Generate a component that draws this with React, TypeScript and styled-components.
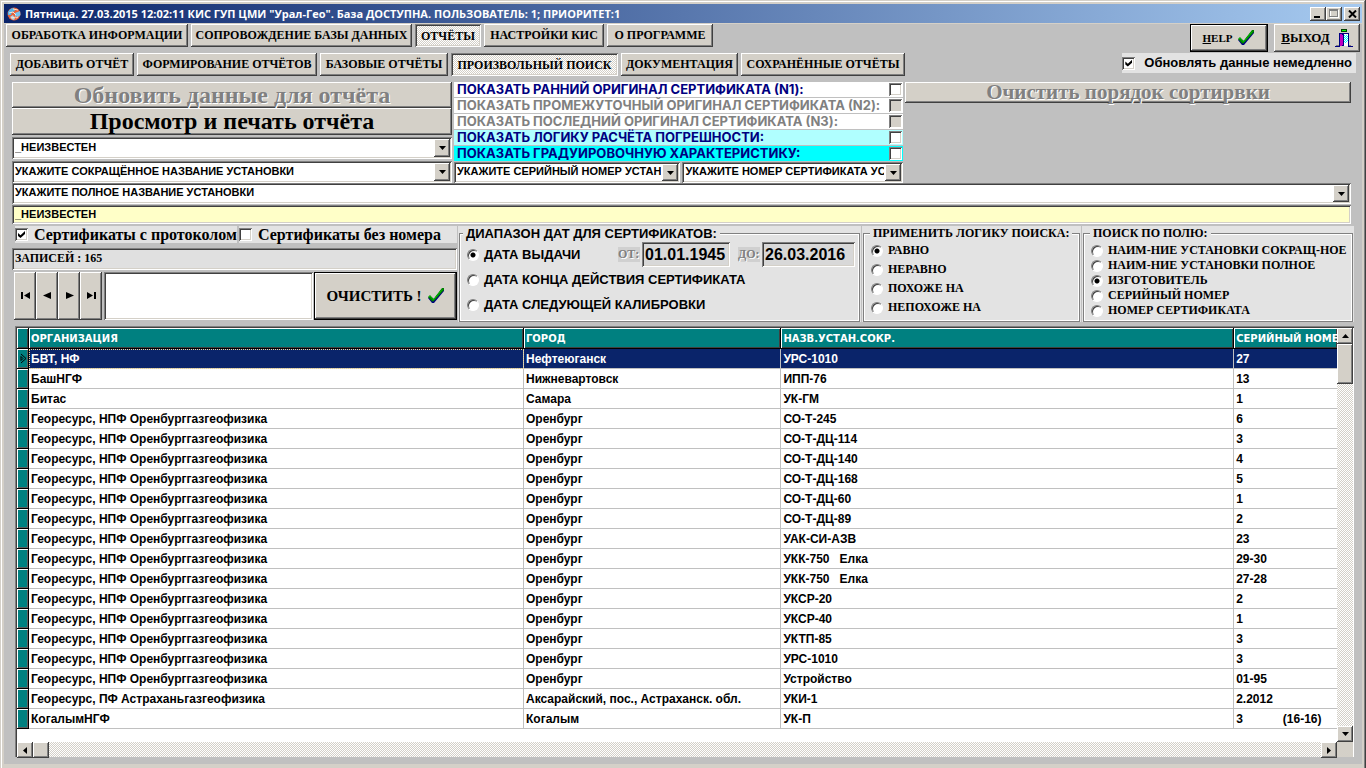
import React from 'react';
import styled, { createGlobalStyle, css } from 'styled-components';

const SERIF = '"Times New Roman", "Liberation Serif", serif';
const SANS = 'Arial, "Liberation Sans", sans-serif';
const COMIC = '"Comic Sans MS", "DejaVu Sans", sans-serif';
const COMIC_LARGE = '"Comic Sans MS", Inter, sans-serif';
const FACE = '#d4d0c8';

const raised = css`
  box-shadow: inset -1px -1px 0 #404040, inset 1px 1px 0 #fff, inset -2px -2px 0 #808080;
`;
const sunken = css`
  box-shadow: inset 1px 1px 0 #808080, inset -1px -1px 0 #fff, inset 2px 2px 0 #404040,
    inset -2px -2px 0 ${FACE};
`;
const dither = css`
  background: repeating-conic-gradient(#fff 0 25%, ${FACE} 0 50%) 0 0 / 2px 2px;
`;

const GlobalStyle = createGlobalStyle`
  * { box-sizing: border-box; }
  body { margin: 0; background: ${FACE}; color: #000; }
  button, input, select { margin: 0; border: 0; border-radius: 0; padding: 0; color: inherit; font: inherit; }
`;

const Frame = styled.div`
  display: flex;
  flex-direction: column;
  min-height: 100vh;
  padding: 4px;
  background: ${FACE};
  box-shadow: inset -1px 0 0 #404040, inset 1px 1px 0 ${FACE}, inset -2px 0 0 #808080, inset 2px 2px 0 #fff;
`;

const TitleBar = styled.header`
  display: flex;
  align-items: center;
  gap: 4px;
  height: 19px;
  margin-bottom: 1px;
  padding: 0 2px 0 3px;
  background: linear-gradient(90deg, #0a246a, #a6caf0);
  color: #fff;
`;
const Title = styled.h1`
  flex: 1;
  margin: 0;
  font: bold 11px/19px Tahoma, "Open Sans", sans-serif;
  white-space: nowrap;
`;
const WindowButtons = styled.div`
  display: flex;
`;
const WindowButton = styled.button<{ $gap?: boolean }>`
  display: flex;
  align-items: center;
  justify-content: center;
  width: 16px;
  height: 14px;
  margin-left: ${(p) => (p.$gap ? 2 : 0)}px;
  background: ${FACE};
  ${raised}
`;

const Client = styled.main`
  display: flex;
  flex: 1;
  flex-direction: column;
  background: #c0c0c0;
`;

const Header = styled.div`
  display: flex;
  justify-content: space-between;
  padding: 0 2px;
`;
const TabRows = styled.nav`
  display: flex;
  flex-direction: column;
  gap: 6px;
`;
const TabRow = styled.div<{ $indent?: boolean }>`
  display: flex;
  gap: 3px;
  padding-left: ${(p) => (p.$indent ? 4 : 0)}px;
`;
const Tab = styled.button<{ $w: number; $active?: boolean }>`
  min-width: ${(p) => p.$w}px;
  height: 23px;
  padding: 0 2px 2px;
  background: ${FACE};
  font: bold 12px/20px ${SERIF};
  white-space: nowrap;
  ${raised}
  ${(p) => p.$active && css`
    padding: 0 2px;
    ${dither}
    ${sunken}
  `}
`;
const HeaderSide = styled.div`
  display: flex;
  flex-direction: column;
  align-items: flex-end;
  gap: 1px;
`;
const HeaderButtons = styled.div`
  display: flex;
  gap: 6px;
`;
const SideButton = styled.button<{ $w: number; $default?: boolean }>`
  display: flex;
  align-items: center;
  justify-content: center;
  gap: 5px;
  width: ${(p) => p.$w}px;
  height: 28px;
  border: ${(p) => (p.$default ? '1px solid #000' : '0')};
  background: ${FACE};
  font: bold ${(p) => (p.$default ? 11 : 13)}px/20px ${SERIF};
  ${raised}
`;
const Instant = styled.label`
  display: flex;
  align-items: center;
  gap: 9px;
  height: 20px;
  margin-right: 4px;
  padding: 0 4px 0 0;
  background: #e3e3e3;
  font: bold 13px/20px ${SANS};
  white-space: nowrap;
`;

const Check = styled.input.attrs({ type: 'checkbox' })`
  flex: none;
  position: relative;
  width: 13px;
  height: 13px;
  appearance: none;
  background: #fff;
  ${sunken}
  &:disabled { background: ${FACE}; }
  &:checked::after {
    content: "";
    position: absolute;
    inset: 3px;
    background: #000;
    clip-path: polygon(0 28%, 36% 60%, 100% 0, 100% 42%, 36% 100%, 0 70%);
  }
`;
const Radio = styled.input.attrs({ type: 'radio' })`
  flex: none;
  width: 12px;
  height: 12px;
  appearance: none;
  border: 1px solid;
  border-color: #808080 #fff #fff #808080;
  border-radius: 50%;
  background: #fff;
  box-shadow: inset 1px 1px 0 #404040;
  &:checked { background: radial-gradient(circle, #000 2px, #fff 3px); }
`;

const Filters = styled.section`
  display: flex;
  flex-direction: column;
  padding: 6px 11px 0 8px;
`;
const FilterGrid = styled.div`
  display: grid;
  grid-template-columns: 440fr 449fr 446fr;
  gap: 2px;
  align-items: start;
`;
const Stack = styled.div<{ $gap?: number }>`
  display: flex;
  flex-direction: column;
  min-width: 0;
  gap: ${(p) => p.$gap ?? 0}px;
`;
const BigButton = styled.button<{ $h: number; $size?: number }>`
  width: 100%;
  height: ${(p) => p.$h}px;
  background: ${FACE};
  font: bold ${(p) => p.$size ?? 24}px/${(p) => p.$h}px ${SERIF};
  white-space: nowrap;
  ${raised}
  &:disabled { color: #808080; text-shadow: 1px 1px 0 #fff; }
`;
const ComboBox = styled.div<{ $h: number; $grow: number }>`
  display: grid;
  flex: ${(p) => p.$grow} 1 0;
  min-width: 0;
  height: ${(p) => p.$h}px;
  padding: 2px;
  background: #fff;
  ${sunken}
`;
const ComboSelect = styled.select`
  grid-area: 1 / 1;
  width: 100%;
  min-width: 0;
  padding: 0 17px 2px 1px;
  appearance: none;
  background: transparent;
  font: bold 11px/15px ${SANS};
  text-overflow: clip;
  outline: 0;
`;
const ArrowBox = styled.span`
  z-index: 1;
  display: flex;
  grid-area: 1 / 1;
  align-items: center;
  justify-content: center;
  justify-self: end;
  width: 16px;
  background: ${FACE};
  pointer-events: none;
  ${raised}
`;
const ComboRow = styled.div`
  display: flex;
  gap: 2px;
`;
const ShowOption = styled.label<{ $bg: string; $off?: boolean }>`
  display: flex;
  align-items: center;
  height: 16px;
  padding: 0 1px 0 3px;
  border-bottom: 1px solid #c0c0c0;
  background: ${(p) => p.$bg};
  color: ${(p) => (p.$off ? '#808080' : '#000080')};
  font: bold 13px/15px ${COMIC_LARGE};
  white-space: nowrap;
`;
const OptionText = styled.span`
  flex: 1;
  min-width: 0;
`;
const Maker = styled.input`
  width: 100%;
  height: 19px;
  margin-top: 1px;
  padding: 0 3px 2px;
  background: #ffffc8;
  font: bold 11px/17px ${SANS};
  outline: 0;
  ${sunken}
`;

const Search = styled.section`
  display: grid;
  grid-template-columns: 445fr 403fr 219fr 272fr;
  gap: 1px;
  padding: 2px 8px 0 8px;
`;
const CertRow = styled.div`
  display: flex;
  gap: 2px;
  padding-left: 3px;
`;
const CertLabel = styled.label<{ $grow: number }>`
  display: flex;
  flex: ${(p) => p.$grow} 1 0;
  align-items: center;
  gap: 6px;
  min-width: 0;
  height: 17px;
  background: #e3e3e3;
  font: bold 16px/17px ${SERIF};
  white-space: nowrap;
`;
const Records = styled.div`
  height: 22px;
  margin: 5px 0 2px;
  padding: 0 3px;
  background: #e0e0e0;
  font: bold 12px/20px ${SERIF};
  ${sunken}
`;
const NavRow = styled.div`
  display: flex;
  height: 48px;
  padding-left: 2px;
`;
const NavButton = styled.button`
  display: flex;
  align-items: center;
  justify-content: center;
  width: 22px;
  background: ${FACE};
  ${raised}
`;
const QueryInput = styled.input`
  flex: 1;
  min-width: 0;
  margin: 0 1px 0 2px;
  padding: 0 4px;
  background: #fff;
  font: bold 14px/20px ${SANS};
  outline: 0;
  ${sunken}
`;
const ClearButton = styled.button`
  display: flex;
  align-items: center;
  justify-content: center;
  gap: 5px;
  width: 143px;
  border: 1px solid #000;
  background: ${FACE};
  font: bold 15px/20px ${SERIF};
  ${raised}
`;

const Panel = styled.div`
  min-width: 0;
  min-height: 96px;
  padding: 0 1px;
  background: #e3e3e3;
`;
const Group = styled.fieldset<{ $serif?: boolean; $pad: number }>`
  height: 100%;
  min-width: 0;
  margin: 0;
  padding: ${(p) => p.$pad}px 4px 0 7px;
  border: 1px solid #808080;
  box-shadow: inset 1px 1px 0 #fff, inset -1px -1px 0 #fff;
  font: ${(p) => (p.$serif ? `bold 12px/15px ${SERIF}` : `bold 13px/15px ${SANS}`)};
`;
const Legend = styled.legend<{ $inset?: boolean }>`
  height: 15px;
  margin-left: ${(p) => (p.$inset ? -1 : -4)}px;
  padding: 0 3px;
  background: #e3e3e3;
  white-space: nowrap;
`;
const Choices = styled.div`
  display: flex;
  flex-direction: column;
`;
const ChoiceRow = styled.div<{ $h: number }>`
  display: flex;
  align-items: center;
  justify-content: space-between;
  height: ${(p) => p.$h}px;
`;
const Choice = styled.label`
  display: flex;
  align-items: center;
  gap: 5px;
  white-space: nowrap;
`;
const Dates = styled.div`
  display: flex;
  align-items: center;
  gap: 8px;
`;
const DateField = styled.label`
  display: flex;
  align-items: center;
  gap: 2px;
  color: #808080;
  text-shadow: 1px 1px 0 #fff;
  font: bold 12px/15px ${SERIF};
`;
const DateCaption = styled.span`
  width: 22px;
  background: #d0d0d0;
`;
const DateInput = styled.input<{ $w: number }>`
  width: ${(p) => p.$w}px;
  height: 25px;
  padding: 0 3px;
  background: #d8d8d8;
  color: #000;
  font: bold 16px/20px ${SANS};
  outline: 0;
  ${sunken}
`;

const GridBox = styled.section`
  display: flex;
  flex: 1;
  flex-direction: column;
  margin: 4px 8px 7px 11px;
  padding: 2px 1px 0 2px;
  background: #fff;
  box-shadow: inset 1px 1px 0 #808080, inset 2px 2px 0 #404040, inset -1px 0 0 #fff;
`;
const GridMain = styled.div`
  display: flex;
  flex: 1;
`;
const TableArea = styled.div`
  flex: 1;
  min-width: 0;
  overflow: hidden;
`;
const Table = styled.table`
  width: 100%;
  table-layout: fixed;
  border-collapse: separate;
  border-spacing: 0;
  font: bold 12px/17px ${SANS};
`;
const Col = styled.col<{ $w?: string }>`
  width: ${(p) => p.$w ?? 'auto'};
`;
const HeadCell = styled.th`
  height: 21px;
  padding: 2px 2px 0;
  overflow: hidden;
  border-right: 1px solid #000;
  border-bottom: 1px solid #000;
  background: #008080;
  box-shadow: inset 1px 1px 0 #fff, inset -1px -1px 0 #404040;
  color: #fff;
  font: bold 10px/18px ${COMIC};
  text-align: left;
  white-space: nowrap;
  &:last-child { border-right: 0; }
`;
const Marker = styled.td`
  padding: 0;
  border-right: 1px solid #000;
  border-bottom: 1px solid #000;
  background: #008080;
  box-shadow: inset 1px 1px 0 #fff, inset -1px -1px 0 #606060;
  line-height: 0;
`;
const Cell = styled.td`
  height: 20px;
  padding: 2px 2px 0;
  overflow: hidden;
  border-right: 1px solid #c0c0c0;
  border-bottom: 1px solid #c0c0c0;
  white-space: pre;
  &:last-child { border-right: 0; }
`;
const Row = styled.tr<{ $selected?: boolean }>`
  ${(p) => p.$selected && css`
    background: #0a246a;
    color: #fff;
    ${Cell}:nth-child(2) { outline: 1px dotted #f5db95; outline-offset: -1px; }
  `}
`;
const VScroll = styled.div`
  display: flex;
  flex-direction: column;
  width: 16px;
  ${dither}
`;
const HScroll = styled.div`
  display: flex;
  height: 15px;
  ${dither}
`;
const ScrollButton = styled.button`
  display: flex;
  flex: none;
  align-items: center;
  justify-content: center;
  width: 16px;
  height: 16px;
  background: ${FACE};
  ${raised}
`;
const Thumb = styled.div<{ $w: number; $h: number }>`
  width: ${(p) => p.$w}px;
  height: ${(p) => p.$h}px;
  background: ${FACE};
  ${raised}
`;
const Spacer = styled.div`
  flex: 1;
`;
const Corner = styled.div`
  width: 16px;
  background: ${FACE};
`;

const Arrow = ({ dir }: { dir: 'up' | 'down' | 'left' | 'right' }) => {
  const shape = {
    up: '0,4 7,4 3.5,0',
    down: '0,0 7,0 3.5,4',
    left: '4,0 4,7 0,3.5',
    right: '0,0 0,7 4,3.5',
  }[dir];
  const wide = dir === 'up' || dir === 'down';
  return (
    <svg width={wide ? 7 : 4} height={wide ? 4 : 7} aria-hidden="true">
      <polygon points={shape} />
    </svg>
  );
};

const Tick = () => (
  <svg width="18" height="16" viewBox="0 0 18 16" aria-hidden="true">
    <path d="M1 10 L3 8 L7 11 L15 1 H17 V3 L7 15 L5 15 Z" fill="#000080" />
    <path d="M1 9 L3 7 L6.500 11 L15 0 H17 V2 L6.500 13.500 L5 13.500 Z" fill="#008000" />
    <path d="M2 9 L3 8 L6.500 12 L15 1.500" fill="none" stroke="#00c000" />
  </svg>
);

const Door = () => (
  <svg width="18" height="18" viewBox="0 0 18 18" shapeRendering="crispEdges" aria-hidden="true">
    <rect x="6" y="0" width="6" height="3" fill="#004000" />
    <rect x="7" y="1" width="4" height="1" fill="#00ff00" />
    <rect x="4" y="4" width="10" height="13" fill="#000080" />
    <rect x="9" y="5" width="4" height="12" fill="#fff" />
    <path d="M9 6.500h1M11 6.500h1M10 7.500h1M12 7.500h1M9 8.500h1M11 8.500h1M10 9.500h1M12 9.500h1M9 10.500h1M11 10.500h1M10 11.500h1M12 11.500h1M9 12.500h1M11 12.500h1M10 13.500h1" stroke="#00ffff" />
    <path d="M5 5 L8 6 V16 L5 17 Z" fill="#c000c0" />
    <path d="M0 17.500h5M13 17.500h5" stroke="#000080" />
    <path d="M1 16.500h3M14 16.500h2" stroke="#808080" />
  </svg>
);

const Globe = () => (
  <svg width="14" height="14" viewBox="0 0 14 14" aria-hidden="true">
    <circle cx="7" cy="7" r="6.500" fill="#e8613a" />
    <path d="M1 5 Q3 1 7 1 L8 4 L5 5 L4 8 L1 8 Z" fill="#58b4e8" />
    <path d="M8 6 L13 4 L13.500 8 L11 10 L8 9 Z" fill="#78c4f0" />
    <path d="M3 10 L6 8 L8 12 L6 13 Z" fill="#a8d8f4" />
    <path d="M2 6 L6 5 L9 8 M6 2 L11 3 M4 11 L9 10 M9 11 L11 10" fill="none" stroke="#ffe4cc" />
  </svg>
);

type NavKind = 'first' | 'prev' | 'next' | 'last';
const NavIcon = ({ kind }: { kind: NavKind }) => (
  <svg width="11" height="8" viewBox="0 0 11 8" aria-hidden="true">
    {kind === 'first' && <path d="M1 0h2v7H1zM10 0v7L4 3.500z" />}
    {kind === 'prev' && <path d="M9 0v7L1 3.500z" />}
    {kind === 'next' && <path d="M2 0v7L10 3.500z" />}
    {kind === 'last' && <path d="M1 0v7L7 3.500zM8 0h2v7H8z" />}
  </svg>
);

type ComboProps = { text: string; label: string; height: number; grow?: number };
const Combo = ({ text, label, height, grow = 1 }: ComboProps) => (
  <ComboBox $h={height} $grow={grow}>
    <ComboSelect aria-label={label} defaultValue={text}>
      <option>{text}</option>
    </ComboSelect>
    <ArrowBox>
      <Arrow dir="down" />
    </ArrowBox>
  </ComboBox>
);

const topTabs = [
  { text: 'ОБРАБОТКА ИНФОРМАЦИИ', w: 182 },
  { text: 'СОПРОВОЖДЕНИЕ БАЗЫ ДАННЫХ', w: 221 },
  { text: 'ОТЧЁТЫ', w: 66, active: true },
  { text: 'НАСТРОЙКИ КИС', w: 120 },
  { text: 'О ПРОГРАММЕ', w: 106 },
];
const reportTabs = [
  { text: 'ДОБАВИТЬ ОТЧЁТ', w: 124 },
  { text: 'ФОРМИРОВАНИЕ ОТЧЁТОВ', w: 180 },
  { text: 'БАЗОВЫЕ ОТЧЁТЫ', w: 128 },
  { text: 'ПРОИЗВОЛЬНЫЙ ПОИСК', w: 167, active: true },
  { text: 'ДОКУМЕНТАЦИЯ', w: 117 },
  { text: 'СОХРАНЁННЫЕ ОТЧЁТЫ', w: 164 },
];
const showOptions = [
  { text: 'ПОКАЗАТЬ РАННИЙ ОРИГИНАЛ СЕРТИФИКАТА (N1):', bg: '#fff' },
  { text: 'ПОКАЗАТЬ ПРОМЕЖУТОЧНЫЙ ОРИГИНАЛ СЕРТИФИКАТА (N2):', bg: '#fff', off: true },
  { text: 'ПОКАЗАТЬ ПОСЛЕДНИЙ ОРИГИНАЛ СЕРТИФИКАТА (N3):', bg: '#fff', off: true },
  { text: 'ПОКАЗАТЬ ЛОГИКУ РАСЧЁТА ПОГРЕШНОСТИ:', bg: '#b0ffff' },
  { text: 'ПОКАЗАТЬ ГРАДУИРОВОЧНУЮ ХАРАКТЕРИСТИКУ:', bg: '#00ffff' },
];
const logicChoices = ['РАВНО', 'НЕРАВНО', 'ПОХОЖЕ НА', 'НЕПОХОЖЕ НА'];
const fieldChoices = [
  'НАИМ-НИЕ УСТАНОВКИ СОКРАЩ-НОЕ',
  'НАИМ-НИЕ УСТАНОВКИ ПОЛНОЕ',
  'ИЗГОТОВИТЕЛЬ',
  'СЕРИЙНЫЙ НОМЕР',
  'НОМЕР СЕРТИФИКАТА',
];
const navButtons: { kind: NavKind; label: string }[] = [
  { kind: 'first', label: 'Первая запись' },
  { kind: 'prev', label: 'Предыдущая запись' },
  { kind: 'next', label: 'Следующая запись' },
  { kind: 'last', label: 'Последняя запись' },
];

const ORENBURG = 'Георесурс, НПФ Оренбурггазгеофизика';
const rows: string[][] = [
  ['БВТ, НФ', 'Нефтеюганск', 'УРС-1010', '27'],
  ['БашНГФ', 'Нижневартовск', 'ИПП-76', '13'],
  ['Битас', 'Самара', 'УК-ГМ', '1'],
  ...[
    ['СО-Т-245', '6'],
    ['СО-Т-ДЦ-114', '3'],
    ['СО-Т-ДЦ-140', '4'],
    ['СО-Т-ДЦ-168', '5'],
    ['СО-Т-ДЦ-60', '1'],
    ['СО-Т-ДЦ-89', '2'],
    ['УАК-СИ-АЗВ', '23'],
    ['УКК-750   Елка', '29-30'],
    ['УКК-750   Елка', '27-28'],
    ['УКСР-20', '2'],
    ['УКСР-40', '1'],
    ['УКТП-85', '3'],
    ['УРС-1010', '3'],
    ['Устройство', '01-95'],
  ].map(([device, serial]) => [ORENBURG, 'Оренбург', device, serial]),
  ['Георесурс, ПФ Астраханьгазгеофизика', 'Аксарайский, пос., Астраханск. обл.', 'УКИ-1', '2.2012'],
  ['КогалымНГФ', 'Когалым', 'УК-П', '3            (16-16)'],
];

export default function App() {
  return (
    <>
      <GlobalStyle />
      <Frame>
        <TitleBar>
          <Globe />
          <Title>
            Пятница. 27.03.2015 12:02:11 КИС ГУП ЦМИ "Урал-Гео". База ДОСТУПНА. ПОЛЬЗОВАТЕЛЬ: 1; ПРИОРИТЕТ:1
          </Title>
          <WindowButtons>
            <WindowButton aria-label="Свернуть">
              <svg width="10" height="9"><path d="M1 7h6v2H1z" /></svg>
            </WindowButton>
            <WindowButton aria-label="Развернуть" disabled>
              <svg width="10" height="9" shapeRendering="crispEdges">
                <path d="M1.500 1.500h8v7h-8z" fill="none" stroke="#fff" />
                <path d="M0.500 1.500h8M0.500 0.500h8v7h-8z" fill="none" stroke="#808080" />
              </svg>
            </WindowButton>
            <WindowButton aria-label="Закрыть" $gap>
              <svg width="9" height="8"><path d="M1 0.500l7 7M8 0.500l-7 7" stroke="#000" strokeWidth="2" /></svg>
            </WindowButton>
          </WindowButtons>
        </TitleBar>

        <Client>
          <Header>
            <TabRows>
              <TabRow>
                {topTabs.map((t) => (
                  <Tab key={t.text} $w={t.w} $active={t.active}>{t.text}</Tab>
                ))}
              </TabRow>
              <TabRow $indent>
                {reportTabs.map((t) => (
                  <Tab key={t.text} $w={t.w} $active={t.active}>{t.text}</Tab>
                ))}
              </TabRow>
            </TabRows>
            <HeaderSide>
              <HeaderButtons>
                <SideButton $w={78} $default>
                  <span><u>H</u>ELP</span>
                  <Tick />
                </SideButton>
                <SideButton $w={86}>
                  <span><u>В</u>ЫХОД</span>
                  <Door />
                </SideButton>
              </HeaderButtons>
              <Instant>
                <Check defaultChecked />
                Обновлять данные немедленно
              </Instant>
            </HeaderSide>
          </Header>

          <Filters>
            <FilterGrid>
              <Stack $gap={2}>
                <Stack>
                  <BigButton $h={26} disabled>Обновить данные для отчёта</BigButton>
                  <BigButton $h={27}>Просмотр и печать отчёта</BigButton>
                </Stack>
                <ComboRow><Combo height={22} label="Изготовитель" text="_НЕИЗВЕСТЕН" /></ComboRow>
                <ComboRow><Combo height={22} label="Сокращённое название" text="УКАЖИТЕ СОКРАЩЁННОЕ НАЗВАНИЕ УСТАНОВКИ" /></ComboRow>
              </Stack>
              <Stack>
                {showOptions.map((o) => (
                  <ShowOption key={o.text} $bg={o.bg} $off={o.off}>
                    <OptionText>{o.text}</OptionText>
                    <Check disabled={o.off} />
                  </ShowOption>
                ))}
                <ComboRow>
                  <Combo height={21} grow={226} label="Серийный номер" text="УКАЖИТЕ СЕРИЙНЫЙ НОМЕР УСТАНОВКИ" />
                  <Combo height={21} grow={220} label="Номер сертификата" text="УКАЖИТЕ НОМЕР СЕРТИФИКАТА УСТАНОВКИ" />
                </ComboRow>
              </Stack>
              <BigButton $h={21} $size={21} disabled>Очистить порядок сортирвки</BigButton>
            </FilterGrid>
            <ComboRow><Combo height={21} label="Полное название" text="УКАЖИТЕ ПОЛНОЕ НАЗВАНИЕ УСТАНОВКИ" /></ComboRow>
            <Maker aria-label="Значение" defaultValue="_НЕИЗВЕСТЕН" />
          </Filters>

          <Search>
            <Stack>
              <CertRow>
                <CertLabel $grow={222}><Check defaultChecked />Сертификаты с протоколом</CertLabel>
                <CertLabel $grow={218}><Check />Сертификаты без номера</CertLabel>
              </CertRow>
              <Records>ЗАПИСЕЙ : 165</Records>
              <NavRow>
                {navButtons.map((n) => (
                  <NavButton key={n.kind} aria-label={n.label}><NavIcon kind={n.kind} /></NavButton>
                ))}
                <QueryInput aria-label="Строка поиска" />
                <ClearButton>ОЧИСТИТЬ !<Tick /></ClearButton>
              </NavRow>
            </Stack>

            <Panel>
              <Group $pad={1}>
                <Legend>ДИАПАЗОН ДАТ ДЛЯ СЕРТИФИКАТОВ:</Legend>
                <Choices>
                  <ChoiceRow $h={25}>
                    <Choice><Radio name="date" defaultChecked />ДАТА ВЫДАЧИ</Choice>
                    <Dates>
                      <DateField><DateCaption>ОТ:</DateCaption><DateInput $w={88} defaultValue="01.01.1945" /></DateField>
                      <DateField><DateCaption>ДО:</DateCaption><DateInput $w={93} defaultValue="26.03.2016" /></DateField>
                    </Dates>
                  </ChoiceRow>
                  <ChoiceRow $h={25}>
                    <Choice><Radio name="date" />ДАТА КОНЦА ДЕЙСТВИЯ СЕРТИФИКАТА</Choice>
                  </ChoiceRow>
                  <ChoiceRow $h={25}>
                    <Choice><Radio name="date" />ДАТА СЛЕДУЮЩЕЙ КАЛИБРОВКИ</Choice>
                  </ChoiceRow>
                </Choices>
              </Group>
            </Panel>

            <Panel>
              <Group $serif $pad={0}>
                <Legend $inset>ПРИМЕНИТЬ ЛОГИКУ ПОИСКА:</Legend>
                <Choices>
                  {logicChoices.map((c, i) => (
                    <ChoiceRow key={c} $h={19}>
                      <Choice><Radio name="logic" defaultChecked={i === 0} />{c}</Choice>
                    </ChoiceRow>
                  ))}
                </Choices>
              </Group>
            </Panel>

            <Panel>
              <Group $serif $pad={2}>
                <Legend $inset>ПОИСК ПО ПОЛЮ:</Legend>
                <Choices>
                  {fieldChoices.map((c, i) => (
                    <ChoiceRow key={c} $h={15}>
                      <Choice><Radio name="field" defaultChecked={i === 2} />{c}</Choice>
                    </ChoiceRow>
                  ))}
                </Choices>
              </Group>
            </Panel>
          </Search>

          <GridBox>
            <GridMain>
              <TableArea>
                <Table>
                  <colgroup>
                    <Col $w="12px" />
                    <Col $w="37.5%" />
                    <Col $w="19.5%" />
                    <Col $w="34.3%" />
                    <Col />
                  </colgroup>
                  <thead>
                    <tr>
                      <HeadCell aria-label="Текущая запись" />
                      <HeadCell>ОРГАНИЗАЦИЯ</HeadCell>
                      <HeadCell>ГОРОД</HeadCell>
                      <HeadCell>НАЗВ.УСТАН.СОКР.</HeadCell>
                      <HeadCell>СЕРИЙНЫЙ НОМЕР</HeadCell>
                    </tr>
                  </thead>
                  <tbody>
                    {rows.map((r, i) => (
                      <Row key={i} $selected={i === 0}>
                        <Marker>
                          {i === 0 && (
                            <svg width="11" height="11" aria-hidden="true">
                              <path d="M4 1l5 4.500-5 4.500M4 3.500v4l2-2z" fill="none" stroke="#000" />
                            </svg>
                          )}
                        </Marker>
                        {r.map((c, j) => <Cell key={j}>{c}</Cell>)}
                      </Row>
                    ))}
                  </tbody>
                </Table>
              </TableArea>
              <VScroll>
                <ScrollButton aria-label="Вверх"><Arrow dir="up" /></ScrollButton>
                <Thumb $w={16} $h={40} />
                <Spacer />
                <ScrollButton aria-label="Вниз"><Arrow dir="down" /></ScrollButton>
              </VScroll>
            </GridMain>
            <HScroll>
              <ScrollButton aria-label="Влево"><Arrow dir="left" /></ScrollButton>
              <Thumb $w={16} $h={16} />
              <Spacer />
              <ScrollButton aria-label="Вправо"><Arrow dir="right" /></ScrollButton>
              <Corner />
            </HScroll>
          </GridBox>
        </Client>
      </Frame>
    </>
  );
}
